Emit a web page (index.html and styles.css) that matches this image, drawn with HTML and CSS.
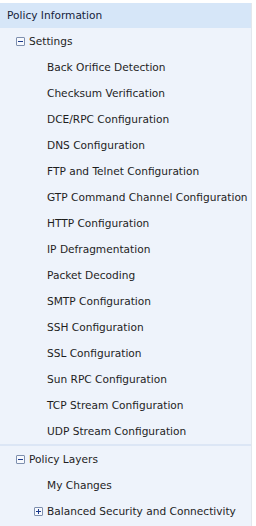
FILE: index.html
```html
<!DOCTYPE html>
<html lang="en">
<head>
    <meta charset="UTF-8">
    <title>Policy Information</title>
    <link rel="stylesheet" href="styles.css">
</head>
<body>
    <div class="panel">
        <div class="panel-header">Policy Information</div>

        <div class="section">
            <div class="node">
                <span class="toggle minus"></span>
                <span>Settings</span>
            </div>
            <div class="leaf">Back Orifice Detection</div>
            <div class="leaf">Checksum Verification</div>
            <div class="leaf">DCE/RPC Configuration</div>
            <div class="leaf">DNS Configuration</div>
            <div class="leaf">FTP and Telnet Configuration</div>
            <div class="leaf">GTP Command Channel Configuration</div>
            <div class="leaf">HTTP Configuration</div>
            <div class="leaf">IP Defragmentation</div>
            <div class="leaf">Packet Decoding</div>
            <div class="leaf">SMTP Configuration</div>
            <div class="leaf">SSH Configuration</div>
            <div class="leaf">SSL Configuration</div>
            <div class="leaf">Sun RPC Configuration</div>
            <div class="leaf">TCP Stream Configuration</div>
            <div class="leaf">UDP Stream Configuration</div>
        </div>

        <div class="section">
            <div class="node">
                <span class="toggle minus"></span>
                <span>Policy Layers</span>
            </div>
            <div class="leaf">My Changes</div>
            <div class="node sub">
                <span class="toggle plus"></span>
                <span>Balanced Security and Connectivity</span>
            </div>
        </div>
    </div>
</body>
</html>
```

FILE: styles.css
```css
body {
    margin: 0;
    background-color: #ffffff;
    font-family: Tahoma, 'DejaVu Sans', sans-serif;
    font-size: 10.6px;
    color: #1e1e1e;
}
.panel {
    width: 251px;
    margin-top: 3px;
    border-right: 1px solid #e3e7ed;
    background-color: #eef3fb;
    height: 523px;
}
.panel-header {
    height: 25px;
    line-height: 25px;
    padding-left: 7px;
    background-color: #d6e6f8;
    color: #15223a;
    white-space: nowrap;
}
.section + .section {
    border-top: 2px solid #dce6f5;
}
.node, .leaf {
    height: 26px;
    display: flex;
    align-items: center;
    white-space: nowrap;
}
.node {
    padding-left: 16px;
    gap: 4px;
}
.node.sub {
    padding-left: 34px;
}
.leaf {
    padding-left: 47px;
}
.toggle {
    width: 7px;
    height: 7px;
    border: 1px solid #7e8fae;
    border-radius: 1px;
    background-color: #f7f9fd;
    position: relative;
    flex-shrink: 0;
}
.toggle::before,
.toggle::after {
    content: '';
    position: absolute;
    background-color: #1b3a8c;
}
.toggle::before {
    left: 1px;
    top: 3px;
    width: 5px;
    height: 1px;
}
.plus::after {
    left: 3px;
    top: 1px;
    width: 1px;
    height: 5px;
}
```
